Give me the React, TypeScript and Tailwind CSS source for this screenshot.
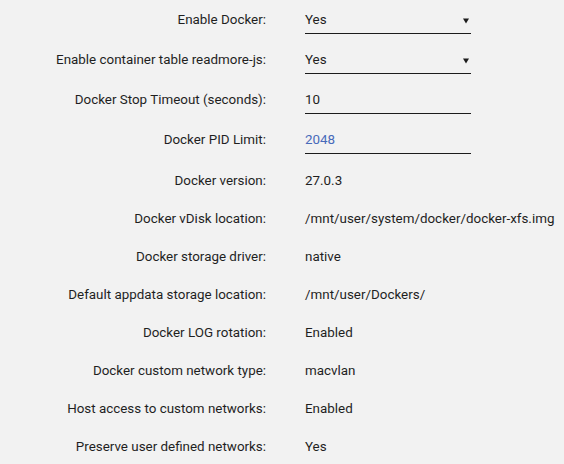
import React from "react";

const inputRows = [
  { label: "Enable Docker:", value: "Yes", select: true },
  { label: "Enable container table readmore-js:", value: "Yes", select: true },
  { label: "Docker Stop Timeout (seconds):", value: "10" },
  { label: "Docker PID Limit:", value: "2048", placeholder: true },
];

const infoRows = [
  { label: "Docker version:", value: "27.0.3" },
  { label: "Docker vDisk location:", value: "/mnt/user/system/docker/docker-xfs.img" },
  { label: "Docker storage driver:", value: "native" },
  { label: "Default appdata storage location:", value: "/mnt/user/Dockers/" },
  { label: "Docker LOG rotation:", value: "Enabled" },
  { label: "Docker custom network type:", value: "macvlan" },
  { label: "Host access to custom networks:", value: "Enabled" },
  { label: "Preserve user defined networks:", value: "Yes" },
];

export default function App() {
  return (
    <div
      className="w-[564px] h-[464px] bg-[#f2f2f2] text-[13.4px] text-[#1f1f1f] overflow-hidden"
      style={{ fontFamily: 'Roboto, "Noto Sans", sans-serif' }}
    >
      {inputRows.map((row, index) => (
        <div key={index} className="flex items-center h-[40px]">
          <div className="w-[266px] text-right pt-[1px]">{row.label}</div>
          <div className="ml-[39px] w-[166px] h-[28px] pt-[2px] border-b border-[#1c1c1c] flex items-center justify-between">
            <span className={row.placeholder ? "text-[#486aba]" : ""}>{row.value}</span>
            {row.select && (
              <svg width="6" height="6" viewBox="0 0 6 6" className="mr-[2px]">
                <polygon points="0,0.5 6,0.5 3,5.5" fill="#1c1c1c" />
              </svg>
            )}
          </div>
        </div>
      ))}
      <div className="mt-[2px]">
        {infoRows.map((row, index) => (
          <div key={index} className="flex items-center h-[38px]">
            <div className="w-[266px] text-right">{row.label}</div>
            <div className="ml-[39px]">{row.value}</div>
          </div>
        ))}
      </div>
    </div>
  );
}
